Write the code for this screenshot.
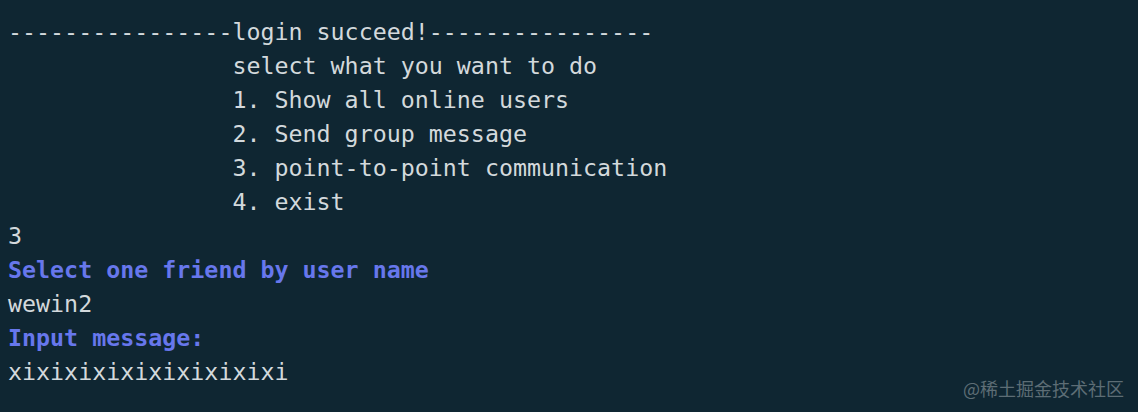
const lines: { text: string; blue?: boolean }[] = [
  { text: '----------------login succeed!----------------' },
  { text: '                select what you want to do' },
  { text: '                1. Show all online users' },
  { text: '                2. Send group message' },
  { text: '                3. point-to-point communication' },
  { text: '                4. exist' },
  { text: '3' },
  { text: 'Select one friend by user name', blue: true },
  { text: 'wewin2' },
  { text: 'Input message:', blue: true },
  { text: 'xixixixixixixixixixi' },
];

export default function App() {
  return (
    <div className="relative w-[1138px] h-[412px] overflow-hidden bg-[#0f2632] font-['DejaVu_Sans_Mono',monospace] text-[23.3px] leading-[34px] text-[#d3d9dc] px-[8px] pt-[15px]">
      {lines.map((l, i) => (
        <div
          key={i}
          className={l.blue ? 'whitespace-pre font-bold text-[#6777ec]' : 'whitespace-pre'}
        >
          {l.text}
        </div>
      ))}
      <div className="absolute right-[14px] bottom-[13px] font-['Noto_Sans_CJK_SC',sans-serif] text-[18px] leading-[22px] text-[#5d6d75]">
        @稀土掘金技术社区
      </div>
    </div>
  );
}
